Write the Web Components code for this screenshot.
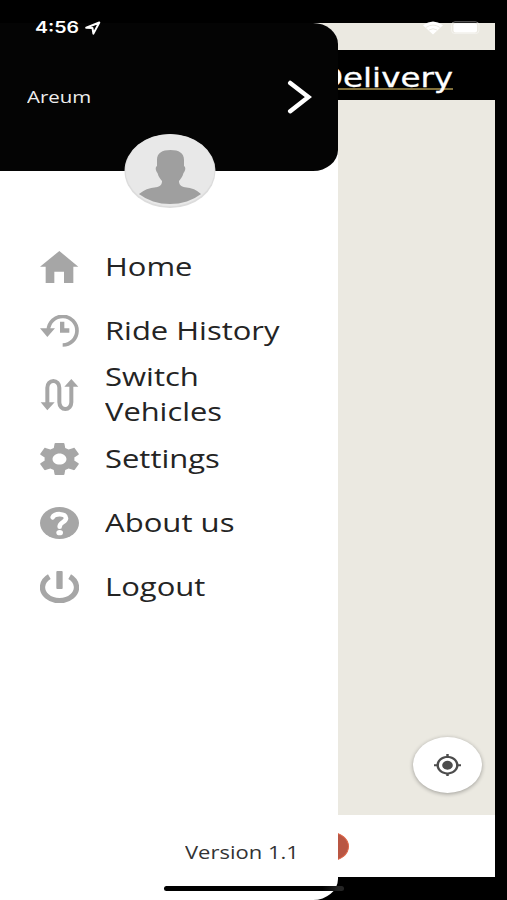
<!DOCTYPE html>
<html lang="en">
<head>
<meta charset="utf-8">
<title>Delivery menu</title>
<style>
html,body{margin:0;background:#000}
body{font-family:"Open Sans","Noto Sans",sans-serif}
</style>
</head>
<body>
<app-screen></app-screen>
<script>
const define = (name, html, after) => customElements.define(name, class extends HTMLElement {
  connectedCallback() {
    if (this.shadowRoot) return;
    this.attachShadow({mode: 'open'}).innerHTML = typeof html === 'function' ? html(this) : html;
    if (after) after(this);
  }
});

// A single line of text widened to fill the width given in its "w" attribute.
define('wide-text', `<style>
:host{display:block;white-space:nowrap}
span{display:inline-block;transform-origin:0 50%}
</style><span><slot></slot></span>`, el => {
  const span = el.shadowRoot.querySelector('span');
  const w = +el.getAttribute('w');
  el.style.width = w + 'px';
  span.style.transform = `scaleX(${w / span.offsetWidth})`;
});

const icons = {
  home: ['0 0 117 96', '<path d="M58 0L115 47H100V96H72V62H43V96H17V47H0Z"/>'],
  history: ['0 0 117 96', '<path d="M0 40H45L22 66Z M60 20H73V40H88V53H60Z"/><path d="M25 45A43 43 0 1 1 68 90" fill="none" stroke="currentColor" stroke-width="11"/>'],
  route: ['0 0 117 96', '<path d="M2 70H44L22 94Z M73 23H115L94 0Z"/><path d="M22 72V26A18 20 0 0 1 58 26V70A18 20 0 0 0 94 70V20" fill="none" stroke="currentColor" stroke-width="12"/>'],
  gear: ['2.2 2 19.6 20', '<path d="M19.43 12.98c.04-.32.07-.64.07-.98s-.03-.66-.07-.98l2.11-1.65c.19-.15.24-.42.12-.64l-2-3.46c-.12-.22-.39-.3-.61-.22l-2.49 1c-.52-.4-1.08-.73-1.69-.98l-.38-2.65C14.46 2.18 14.25 2 14 2h-4c-.25 0-.46.18-.49.42l-.38 2.65c-.61.25-1.17.59-1.69.98l-2.49-1c-.23-.09-.49 0-.61.22l-2 3.46c-.13.22-.07.49.12.64l2.11 1.65c-.04.32-.07.65-.07.98s.03.66.07.98l-2.11 1.65c-.19.15-.24.42-.12.64l2 3.46c.12.22.39.3.61.22l2.49-1c.52.4 1.08.73 1.69.98l.38 2.65c.03.24.24.42.49.42h4c.25 0 .46-.18.49-.42l.38-2.65c.61-.25 1.17-.59 1.69-.98l2.49 1c.23.09.49 0 .61-.22l2-3.46c.12-.22.07-.49-.12-.64l-2.11-1.65zM12 15.5c-1.93 0-3.5-1.57-3.5-3.5s1.57-3.5 3.5-3.5 3.5 1.57 3.5 3.5-1.57 3.5-3.5 3.5z"/>'],
  help: ['0 0 117 96', '<ellipse cx="58.5" cy="48" rx="58.5" ry="48"/><path d="M38 31C44 18 78 18 78 34C78 46 59 45 59 59" fill="none" stroke="#fff" stroke-width="14" stroke-linecap="round"/><ellipse cx="59" cy="77" rx="10" ry="8" fill="#fff"/>'],
  power: ['0 0 117 96', '<rect x="49" y="0" width="19" height="54" rx="3"/><path d="M28 17A51 40 0 1 0 89 17" fill="none" stroke="currentColor" stroke-width="16"/>']
};
define('menu-icon', el => {
  const [box, body] = icons[el.getAttribute('name')];
  return `<style>:host{display:block;width:39px;height:32px;color:#a6a6a6}svg{display:block}</style>
  <svg width="39" height="32" viewBox="${box}" preserveAspectRatio="none" fill="currentColor">${body}</svg>`;
});

define('menu-item', el => `<style>
:host{display:grid;grid-template:64px/39px auto;column-gap:26px;align-items:center;height:64px;padding-left:40px;
font-size:25.3px;line-height:35px;color:#242424}
div{padding-bottom:2px}
</style><menu-icon name="${el.getAttribute('icon')}"></menu-icon><div><slot></slot></div>`);

define('user-avatar', `<style>:host{display:block;width:92px;height:76px}svg{display:block}</style>
<svg width="92" height="76" viewBox="0 0 92 76">
<defs><clipPath id="c"><ellipse cx="46" cy="37" rx="44" ry="34"/></clipPath></defs>
<ellipse cx="46" cy="38" rx="45.5" ry="37" fill="#dcdcdc"/><ellipse cx="46" cy="37.2" rx="44.5" ry="36" fill="#e8e8e8"/>
<path clip-path="url(#c)" fill="#9f9f9f" d="M33 33V27C33 20 38 17 46.5 17S60 20 60 27V33C62 34 61.5 38 59.5 40C58.5 44 56.5 46 55 48C55 52 57 53.5 61 54.2Q71 55 77 61V76H15V61Q22 55 32 54.2C36 53.5 38 52 38 48C36.500 46 34.500 44 33.500 40C31.500 38 31 34 33 33Z"/></svg>`);

define('drawer-header', `<style>
:host{display:block;position:relative;height:148px;background:#040404;border-radius:0 25px 25px 0/0 21px 21px 0;color:#eee}
.row{display:flex;justify-content:space-between;align-items:center;height:148px;padding:0 26px 0 27px;box-sizing:border-box}
wide-text{font-size:16.5px;line-height:24px}
svg{display:block}
user-avatar{position:absolute;left:123.5px;top:110px}
</style><div class="row"><wide-text w="64.500">Areum</wide-text>
<svg width="26" height="34" viewBox="0 0 26 34"><path d="M4.2 3L22.4 17L4.2 31.2" fill="none" stroke="#fff" stroke-width="4.5" stroke-linecap="round"/></svg></div>
<user-avatar></user-avatar>`);

define('side-drawer', `<style>
:host{display:flex;flex-direction:column;box-sizing:border-box;width:338px;height:877px;background:#fff;
border-radius:0 25px 25px 0/0 21px 21px 0}
nav{padding-top:64px;flex:1}
footer{padding:0 0 35px 185px;font-size:18.6px;line-height:26px;color:#333}
</style><drawer-header></drawer-header>
<nav>
<menu-item icon="home"><wide-text w="88">Home</wide-text></menu-item>
<menu-item icon="history"><wide-text w="175">Ride History</wide-text></menu-item>
<menu-item icon="route"><wide-text w="94.500">Switch</wide-text><wide-text w="117">Vehicles</wide-text></menu-item>
<menu-item icon="gear"><wide-text w="115">Settings</wide-text></menu-item>
<menu-item icon="help"><wide-text w="129">About us</wide-text></menu-item>
<menu-item icon="power"><wide-text w="100.5">Logout</wide-text></menu-item>
</nav>
<footer><wide-text w="113.500">Version 1.1</wide-text></footer>`);

define('locate-button', `<style>
:host{display:grid;place-items:center;width:69px;height:56px;border-radius:50%;background:#fff;box-shadow:0 1px 4px #0005}
svg{display:block}</style>
<svg width="27" height="22.500" viewBox="1 1 22 22" preserveAspectRatio="none"><path fill="#4c4c4c" d="M12 7.700c-2.370 0-4.300 1.930-4.300 4.300s1.930 4.300 4.300 4.300 4.300-1.930 4.300-4.300-1.930-4.300-4.300-4.300zm8.940 3.300c-.46-4.170-3.770-7.480-7.940-7.940V1h-2v2.060C6.830 3.520 3.520 6.830 3.060 11H1v2h2.060c.46 4.170 3.770 7.480 7.940 7.940V23h2v-2.060c4.170-.46 7.480-3.770 7.940-7.940H23v-2h-2.060zM12 19c-3.870 0-7-3.130-7-7s3.130-7 7-7 7 3.130 7 7-3.130 7-7 7z"/></svg>`);

define('map-screen', `<style>
:host{display:grid;grid-template-rows:27px 50px 715px 62px;width:494.5px;height:854px;background:#ebe9e1}
header{background:#000;color:#fff;padding-left:318px}
.title{width:135px;height:38px;border-bottom:2px solid #82713c;font:27px/34px "DejaVu Sans",sans-serif;-webkit-text-stroke:.3px #fff}
wide-text{padding-top:11px;position:relative}
.map{display:flex;justify-content:flex-end;align-items:flex-end;padding:0 12.5px 22px 0}
.bar{display:flex;align-items:center;background:#fff;padding-left:313px}
.dot{width:34px;height:27px;border-radius:50%;background:#b95643;border:1px solid #e0694b}
</style><div></div><header><div class="title"><wide-text w="135">Delivery</wide-text></div></header>
<div class="map"><locate-button></locate-button></div><div class="bar"><div class="dot"></div></div>`);

define('status-bar', `<style>
:host{display:flex;align-items:center;height:15px;color:#fff}
wide-text{font:600 15.8px/15px Inter,sans-serif}
svg{display:block}.go{margin-left:6px}.wifi{margin-left:322px}.bat{margin-left:8px}
</style><wide-text w="44.500">4:56</wide-text>
<svg class="go" width="16" height="14" viewBox="0 0 16 14"><path d="M1.2 6.7L14.3 1.500L8.4 12.6L7.5 7.1Z" fill="none" stroke="#fff" stroke-width="2" stroke-linejoin="round"/></svg>
<svg class="wifi" width="20" height="14" viewBox="0 0 20 14"><path d="M0 4.2Q10-3 20 4.2L10 13.5Z" fill="#fff"/><path d="M3.2 6.4Q10 1.7 16.8 6.4M6 9Q10 6.4 14 9" fill="none" stroke="#e6e4dd" stroke-width=".8"/></svg>
<svg class="bat" width="31" height="14" viewBox="0 0 31 14"><rect x=".5" y=".8" width="27.5" height="11.8" rx="3.5" fill="none" stroke="#fff" stroke-opacity=".45"/><rect x="2.5" y="2.2" width="23.5" height="9.200" rx="2" fill="#fff"/></svg>`);

define('app-screen', `<style>
:host{display:grid;position:relative;box-sizing:border-box;width:507px;height:900px;padding-top:23px;background:#000;overflow:hidden}
map-screen,side-drawer{grid-area:1/1}
side-drawer{z-index:1}
status-bar{position:absolute;left:34.5px;top:20px;z-index:2}
.home{position:absolute;left:164px;top:886px;width:180px;height:5px;border-radius:3px;z-index:2;background:linear-gradient(90deg,#000 88%,#242424 97%)}
</style><map-screen></map-screen><side-drawer></side-drawer><status-bar></status-bar><div class="home"></div>`);
</script>
</body>
</html>
